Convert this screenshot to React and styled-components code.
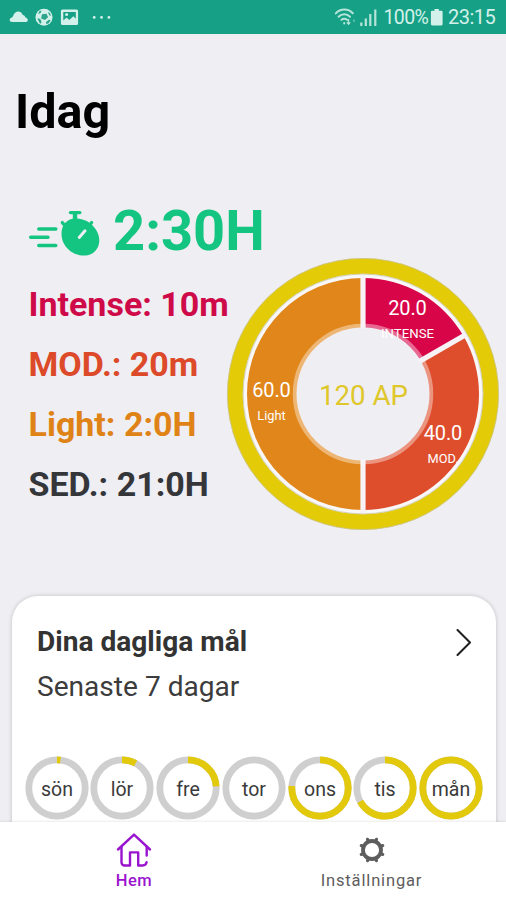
import React from 'react';
import styled, { createGlobalStyle } from 'styled-components';

const stats = [
    { label: 'Intense: 10m', color: '#cf0a48' },
    { label: 'MOD.: 20m', color: '#dc4a29' },
    { label: 'Light: 2:0H', color: '#df8317' },
    { label: 'SED.: 21:0H', color: '#35363a' },
];

const days = [
    { name: 'sön', progress: 0.02 },
    { name: 'lör', progress: 0.08 },
    { name: 'fre', progress: 0.24 },
    { name: 'tor', progress: 0 },
    { name: 'ons', progress: 0.76 },
    { name: 'tis', progress: 0.67 },
    { name: 'mån', progress: 1 },
];

const slices = [
    { from: 0, to: 60, color: '#d80648' },
    { from: 60, to: 180, color: '#de4d2c' },
    { from: 180, to: 360, color: '#e1861a' },
];

const point = (angle, r) => {
    const a = (angle * Math.PI) / 180;
    return `${136 + r * Math.sin(a)} ${136 - r * Math.cos(a)}`;
};

const slicePath = ({ from, to }) => {
    const large = to - from > 180 ? 1 : 0;
    return `M${point(from, 116)}A116 116 0 ${large} 1 ${point(to, 116)}L${point(to, 66)}A66 66 0 ${large} 0 ${point(from, 66)}Z`;
};

const DonutChart = () => (
    <Donut viewBox="0 0 272 272">
        <circle cx="136" cy="136" r="119" fill="#f9f7f8" />
        {slices.map((slice) => (
            <path key={slice.from} d={slicePath(slice)} fill={slice.color} />
        ))}
        <circle cx="136" cy="136" r="68" fill="none" stroke="#fff" strokeOpacity="0.4" strokeWidth="4.5" />
        <circle cx="136" cy="136" r="66.5" fill="#efeef3" />
        {slices.map((slice) => (
            <path key={slice.from} d={`M${point(slice.from, 65)}L${point(slice.from, 119)}`} stroke="#f6f2f5" strokeWidth="5.2" />
        ))}
        <circle cx="136" cy="136" r="128" fill="none" stroke="#e4cb08" strokeWidth="15.5" />
        <circle cx="136" cy="136" r="135.6" fill="none" stroke="#c9c494" strokeWidth="0.8" />
        <circle cx="136" cy="136" r="120" fill="none" stroke="#cdc9a0" strokeWidth="0.8" />
        <SliceValue x="180.5" y="57" textLength="38.5">20.0</SliceValue>
        <SliceName x="180.5" y="80" textLength="53" lengthAdjust="spacingAndGlyphs">INTENSE</SliceName>
        <SliceValue x="44.5" y="138.5" textLength="38.5">60.0</SliceValue>
        <SliceName x="44.5" y="161.5" textLength="28.5" lengthAdjust="spacingAndGlyphs">Light</SliceName>
        <SliceValue x="216" y="182" textLength="38.5">40.0</SliceValue>
        <SliceName x="216" y="204.5" textLength="31" lengthAdjust="spacingAndGlyphs">MOD.</SliceName>
        <Points x="136.5" y="147" textLength="89" lengthAdjust="spacingAndGlyphs">120 AP</Points>
    </Donut>
);

const DayRing = ({ name, progress }) => {
    const length = 2 * Math.PI * 28.2;
    return (
        <Day>
            <svg width="64" height="64" viewBox="0 0 64 64">
                <circle cx="32" cy="32" r="28.2" fill="none" stroke="#cfcfcf" strokeWidth="6.8" />
                {progress > 0 && (
                    <circle
                        cx="32"
                        cy="32"
                        r="28.2"
                        fill="none"
                        stroke="#e2c90c"
                        strokeWidth="6.8"
                        strokeDasharray={`${length * progress} ${length}`}
                        transform="rotate(-90 32 32)"
                    />
                )}
                <DayName x="32" y="40.3">{name}</DayName>
            </svg>
        </Day>
    );
};

const App = () => {
    return (
        <Screen>
            <GlobalStyle />
            <StatusBar>
                <svg width="112" height="34" viewBox="0 0 112 34" fill="#d3f1ea">
                    <path d="M12 22c-2.600 0-3.200-3.200-.8-4.200 1-.4 1.600-.8 2-2 .8-2.600 2.800-4.200 5-4.200 2.400 0 3.700 1.300 4.500 3.300 1.600.2 2.400 1.200 2.800 2.600 2.800.6 3.300 4.500.3 4.500z" />
                    <circle cx="44" cy="17.3" r="8.5" />
                    <g fill="#2da58d">
                        <path d="M42 14.2l4.5-.4 1.6 3.4-3.2 2.9-3.8-1.7zM37.3 18.6l2.8.2 1.600 3.2-1.600 2zM46 22l3-2.200 1.800.4-2.400 3.200-2.200.6zM39 11.600l2.400-1.200-.4 2-2.600 1.800zM48.300 11.400l2 2.300.5 2.500-2-1.400z" />
                    </g>
                    <path fillRule="evenodd" d="M62.5 9.500h14a1.600 1.600 0 0 1 1.600 1.600v12.400a1.600 1.600 0 0 1-1.600 1.600h-14a1.600 1.600 0 0 1-1.600-1.600V11.100a1.600 1.600 0 0 1 1.600-1.600zM63.300 12v8.600l3.300-3 2.700 2.300 4-3.700 2.500 2.600V12z" />
                    <circle cx="66.6" cy="14.6" r="1.5" />
                    <circle cx="94.2" cy="17.4" r="1.4" />
                    <circle cx="101.5" cy="17.4" r="1.4" />
                    <circle cx="108.9" cy="17.4" r="1.4" />
                </svg>
                <StatusRight>
                    <svg width="47" height="34" viewBox="0 0 47 34" fill="none" stroke="#b5e4d8">
                        <g strokeWidth="2" strokeLinecap="round">
                            <path d="M1.800 13.400a11.500 11.500 0 0 1 17-.1" />
                            <path d="M4.600 16.700a7.800 7.800 0 0 1 11.400 0" />
                            <path d="M7.400 19.900a4 4 0 0 1 5.700 0" />
                            <path d="M10.200 23v.4" />
                        </g>
                        <path d="M14.500 19v5M12.800 22.400l1.700 1.900 1.700-1.900" strokeWidth="1.3" />
                        <path d="M20 19.500v2.500" strokeWidth="1.3" opacity=".6" />
                        <path d="M27.300 22.500V26M31.800 18.500V26M36.300 14V26M41.300 9.500V26" strokeWidth="2.2" />
                    </svg>
                    <StatusText $width="49.5px" $size="19.5px" $spacing="-.6px">100%</StatusText>
                    <svg width="15" height="34" viewBox="0 0 15 34" fill="#d3f1ea">
                        <path d="M4.500 9h4.400v1.800h2.700a1 1 0 0 1 1 1v12.300a1.300 1.300 0 0 1-1.300 1.300H2.200a1.300 1.300 0 0 1-1.300-1.300V11.800a1 1 0 0 1 1-1h2.600z" />
                    </svg>
                    <StatusText $width="50px" $size="20px" $spacing="-.5px">23:15</StatusText>
                </StatusRight>
            </StatusBar>

            <Main>
                <Title>Idag</Title>
                <TimeRow>
                    <svg width="85" height="54" viewBox="28 204 85 54" fill="none" stroke="#14c581" strokeLinecap="round">
                        <path d="M38.800 229h17M30.700 237.200h17.300M38.800 245.400h17" strokeWidth="3.5" />
                        <path d="M70.500 212.600h9.300" strokeWidth="3.4" />
                        <path d="M75 213v8" strokeWidth="4.4" strokeLinecap="butt" />
                        <path d="M62.300 222.600l3 3.400M91.600 222.600l-2.600 3.400" strokeWidth="3.3" />
                        <path d="M75.500 218.600c6.500 0 12.500 2.400 16.600 6.400 4.500 4.300 7.200 9.800 7.200 15.400 0 8.600-6.300 15.200-15.500 15.200-11.500 0-22.300-9.300-22.300-21.800 0-9 5.800-15.200 14-15.200z" fill="#14c581" stroke="none" />
                        <path d="M79.200 237.400l5.800-6.600" stroke="#efeef3" strokeWidth="3" />
                    </svg>
                    <Time>2:30H</Time>
                </TimeRow>
                <Summary>
                    <StatList>
                        {stats.map((stat) => (
                            <Stat key={stat.label} $color={stat.color}>{stat.label}</Stat>
                        ))}
                    </StatList>
                    <DonutChart />
                </Summary>
                <Card>
                    <CardHeader>
                        <CardTitle>Dina dagliga mål</CardTitle>
                        <svg width="18" height="30" viewBox="0 0 18 30" fill="none" stroke="#202020" strokeWidth="2.1" strokeLinecap="round" strokeLinejoin="round">
                            <path d="M2.500 3L15 15.500 2.500 28" />
                        </svg>
                    </CardHeader>
                    <CardText>Senaste 7 dagar</CardText>
                    <Days>
                        {days.map((day) => (
                            <DayRing key={day.name} name={day.name} progress={day.progress} />
                        ))}
                    </Days>
                </Card>
            </Main>

            <NavBar>
                <NavItem $color="#9a14d0" $width="268px">
                    <svg width="36" height="36" viewBox="0 0 36 36" fill="none" stroke="currentColor" strokeWidth="2.4" strokeLinecap="round" strokeLinejoin="round">
                        <path d="M2 17.500L18 2.600 34 17.500" />
                        <path d="M5.500 15v15.500a3 3 0 0 0 3 3H14V20.400h8.200v13.100h4.600c2.200 0 3.400-1.200 3.800-3.400M30.700 15v8.500" />
                    </svg>
                    <NavLabel $weight="500" $spacing="0.5px">Hem</NavLabel>
                </NavItem>
                <NavItem $color="#5d5d5d" $width="207px">
                    <svg width="36" height="36" viewBox="-18 -18 36 36" fill="none" stroke="currentColor">
                        <circle r="9" strokeWidth="3.8" />
                        {[22.5, 67.5, 112.5, 157.5, 202.5, 247.5, 292.5, 337.5].map((angle) => (
                            <path key={angle} d="M0-10V-11.600" strokeWidth="3.2" strokeLinecap="round" transform={`rotate(${angle})`} />
                        ))}
                    </svg>
                    <NavLabel $weight="400" $spacing="0.85px">Inställningar</NavLabel>
                </NavItem>
            </NavBar>
        </Screen>
    )
}

const GlobalStyle = createGlobalStyle`
    body {
        margin: 0;
        font-family: Roboto, "Liberation Sans", sans-serif;
    }

    svg {
        display: block;
        flex-shrink: 0;
    }
`

const Screen = styled.div`
    display: flex;
    flex-direction: column;
    width: 506px;
    height: 900px;
    overflow: hidden;
    background: #efeef3;
`

const StatusBar = styled.header`
    display: flex;
    justify-content: space-between;
    height: 34px;
    flex-shrink: 0;
    background: #16a085;
    padding-right: 11px;
`

const StatusRight = styled.div`
    display: flex;
    align-items: center;
`

const StatusText = styled.span`
    width: ${(props) => props.$width};
    font-size: ${(props) => props.$size};
    letter-spacing: ${(props) => props.$spacing};
    line-height: 37px;
    padding-left: 3px;
    box-sizing: border-box;
    white-space: nowrap;
    color: #d3f1ea;
`

const Main = styled.main`
    flex: 1;
    min-height: 0;
    overflow: hidden;
`

const Title = styled.h1`
    margin: 48px 0 0 15px;
    font-size: 48.5px;
    line-height: 60px;
    font-weight: bold;
    color: #000;
`

const TimeRow = styled.div`
    display: flex;
    align-items: center;
    height: 54px;
    margin: 62px 0 0 28px;
`

const Time = styled.div`
    font-size: 56px;
    line-height: 54px;
    font-weight: bold;
    color: #14c581;
`

const Summary = styled.section`
    display: flex;
    height: 272px;
`

const StatList = styled.ul`
    list-style: none;
    margin: 0;
    padding: 16px 0 0 28.5px;
    width: 226.5px;
    box-sizing: border-box;
    flex-shrink: 0;
`

const Stat = styled.li`
    font-size: 34px;
    line-height: 60px;
    font-weight: bold;
    white-space: nowrap;
    color: ${(props) => props.$color};
`

const Donut = styled.svg`
    width: 272px;
    height: 272px;
`

const SliceValue = styled.text`
    font-size: 20px;
    text-anchor: middle;
    fill: #fff;
`

const SliceName = styled.text`
    font-size: 12.5px;
    text-anchor: middle;
    fill: #fff;
`

const Points = styled.text`
    font-size: 28.5px;
    text-anchor: middle;
    fill: #dfc72a;
`

const Card = styled.section`
    margin: 66px 10px 0 12px;
    height: 300px;
    padding: 26px 0 0;
    box-sizing: border-box;
    border-radius: 26px;
    background: #fff;
    box-shadow: 0 0 4px rgba(0, 0, 0, 0.2);
`

const CardHeader = styled.div`
    display: flex;
    align-items: center;
    justify-content: space-between;
    padding: 0 23px 0 25px;
`

const CardTitle = styled.h2`
    margin: 0;
    font-size: 28.1px;
    line-height: 40px;
    font-weight: bold;
    color: #333;
`

const CardText = styled.p`
    margin: 5px 0 0 25px;
    font-size: 28.1px;
    line-height: 40px;
    color: #3c3c3c;
`

const Days = styled.div`
    display: grid;
    grid-template-columns: repeat(7, 65.75px);
    margin: 49px 0 0 11.7px;
`

const Day = styled.div`
    display: flex;
    justify-content: center;
`

const DayName = styled.text`
    font-size: 19.5px;
    text-anchor: middle;
    fill: #3a3a3a;
`

const NavBar = styled.nav`
    display: flex;
    height: 78px;
    flex-shrink: 0;
    position: relative;
    background: #fff;
    box-shadow: 0 -1px 2px rgba(0, 0, 0, 0.08);
`

const NavItem = styled.div`
    display: flex;
    flex-direction: column;
    align-items: center;
    width: ${(props) => props.$width};
    padding-top: 9.5px;
    color: ${(props) => props.$color};
`

const NavLabel = styled.span`
    margin-top: 3px;
    font-size: 16.5px;
    line-height: 20px;
    font-weight: ${(props) => props.$weight};
    letter-spacing: ${(props) => props.$spacing};
`

export default App
